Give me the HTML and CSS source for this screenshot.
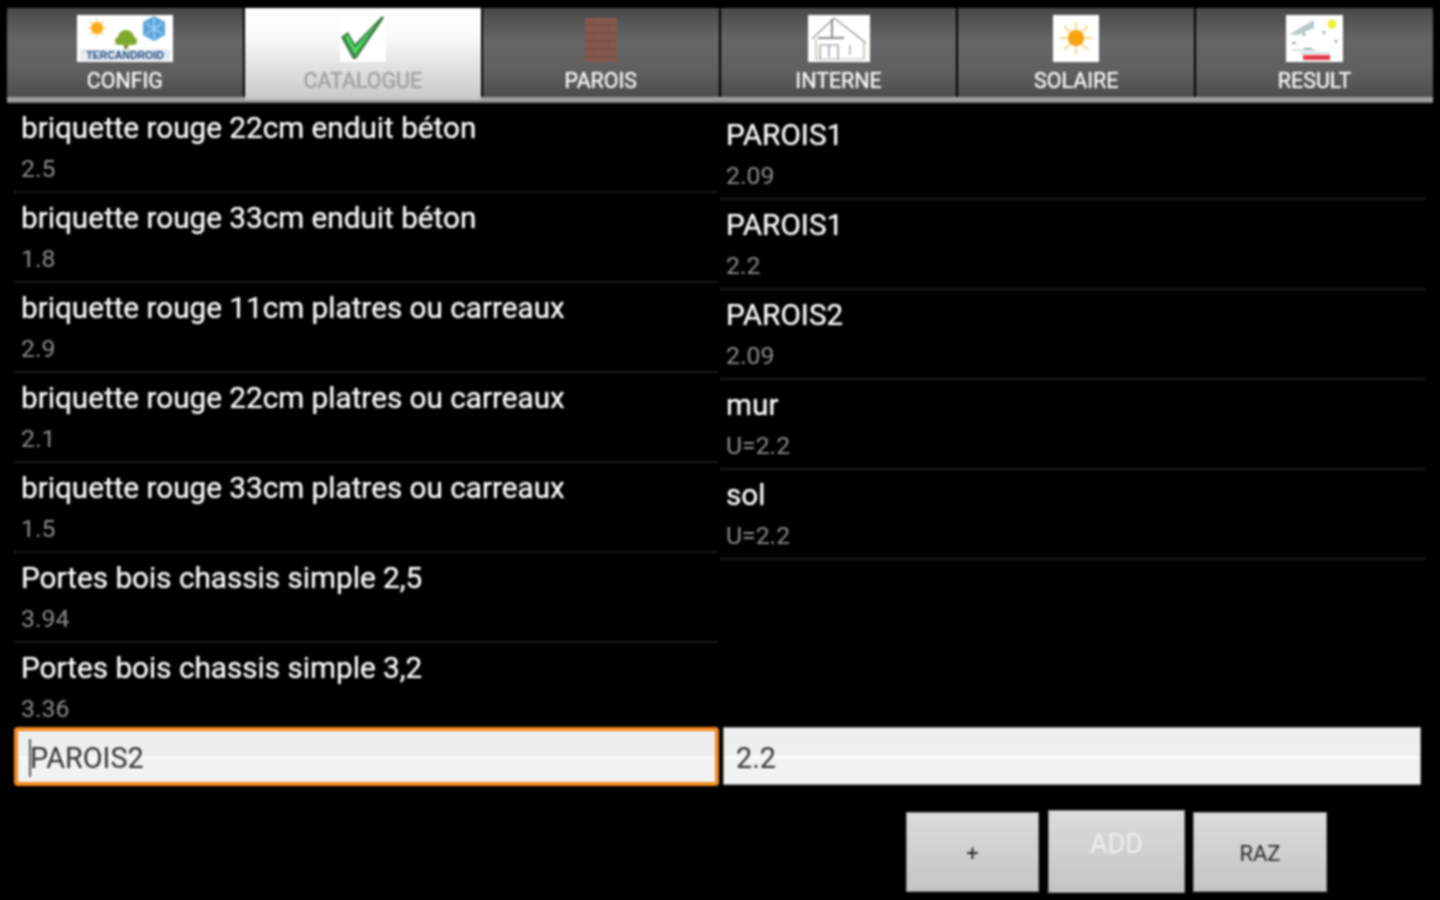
FILE: index.html
```html
<!DOCTYPE html>
<html>
<head>
    <meta charset="utf-8">
    <link rel="stylesheet" href="styles.css">
</head>
<body>
    <div class="app">
        <!-- Tabs -->
        <div class="tabs">
            <div class="tab">
                <svg class="icon" width="96" height="47" viewBox="0 0 96 47">
                    <rect width="96" height="47" fill="#fff"/>
                    <g stroke="#f7e2a8" stroke-width="2">
                        <path d="M20 3V23M10 13H30M13 6L27 20M27 6L13 20"/>
                    </g>
                    <circle cx="20" cy="13" r="6" fill="#f7a81b"/>
                    <path d="M77 1L88 7V20L77 26L66 20V7Z" fill="#5aa5dd"/>
                    <path d="M69 8L85 19M85 8L69 19M77 3V24" stroke="#a9d0ec" stroke-width="1.5"/>
                    <circle cx="49" cy="23" r="8" fill="#7ea92c"/>
                    <circle cx="42" cy="26" r="4" fill="#7ea92c"/>
                    <circle cx="56" cy="26" r="4" fill="#7ea92c"/>
                    <rect x="47" y="29" width="4" height="6" fill="#8a9a3a"/>
                    <rect x="3" y="34" width="90" height="12" fill="#e6ecf3"/>
                    <text class="logo-text" x="48" y="44" text-anchor="middle">TERCANDROID</text>
                </svg>
                <span class="tab-label">CONFIG</span>
            </div>
            <div class="tab active">
                <svg class="icon" width="46" height="47" viewBox="0 0 46 47">
                    <rect width="46" height="47" fill="#fff"/>
                    <path d="M1 22L8 17L15 29L42 1L44 3L16 44H13Z" fill="#3a8044"/>
                    <path d="M5 22L8 20L15 33L37 8L15 40Z" fill="#4fd860"/>
                </svg>
                <span class="tab-label">CATALOGUE</span>
            </div>
            <div class="tab">
                <svg class="icon" width="32" height="44" viewBox="0 0 32 44">
                    <rect width="32" height="44" fill="#85584e"/>
                    <path d="M0 7H32M0 15H32M0 23H32M0 31H32M0 39H32M9 0V7M24 7V15M9 15V23M24 23V31M9 31V39" stroke="#795047" stroke-width="2"/>
                </svg>
                <span class="tab-label">PAROIS</span>
            </div>
            <div class="tab">
                <svg class="icon" width="62" height="47" viewBox="0 0 62 47">
                    <rect width="62" height="47" fill="#fff"/>
                    <path d="M4 24L26 3L58 28" fill="none" stroke="#8d9580" stroke-width="1.2"/>
                    <path d="M8 24V44H56V26" fill="none" stroke="#a9b098" stroke-width="1.2"/>
                    <path d="M10 23H36M24 4V22" stroke="#666" stroke-width="1.5"/>
                    <path d="M12 30H30V44M12 30V44M21 30V42" fill="none" stroke="#888" stroke-width="1.2"/>
                    <path d="M42 30V40" stroke="#bbb" stroke-width="2"/>
                </svg>
                <span class="tab-label">INTERNE</span>
            </div>
            <div class="tab">
                <svg class="icon" width="46" height="47" viewBox="0 0 46 47">
                    <rect width="46" height="47" fill="#fff"/>
                    <path d="M23 7V40M6 23H40M11 11L35 35M35 11L11 35" stroke="#f3e3a0" stroke-width="2.5"/>
                    <circle cx="23" cy="23" r="8" fill="#f7a30f"/>
                </svg>
                <span class="tab-label">SOLAIRE</span>
            </div>
            <div class="tab">
                <svg class="icon" width="57" height="47" viewBox="0 0 57 47">
                    <rect width="57" height="47" fill="#fff"/>
                    <path d="M4 19L28 5V13L12 20Z" fill="#b5c9c6"/>
                    <circle cx="46" cy="9" r="4.5" fill="#eef03a"/>
                    <path d="M6 28H10M38 16V19M50 25V28M18 18V21M18 34H26" stroke="#8c9a9a" stroke-width="2"/>
                    <path d="M6 35H30M14 38H44" stroke="#c3d8dc" stroke-width="1.5"/>
                    <rect x="17" y="40" width="27" height="5" fill="#e23a4a"/>
                </svg>
                <span class="tab-label">RESULT</span>
            </div>
        </div>
        <div class="tabs-line"></div>

        <!-- Lists -->
        <div class="lists">
            <div class="list">
                <div class="row"><div class="row-title">briquette rouge 22cm enduit béton</div><div class="row-sub">2.5</div></div>
                <div class="row"><div class="row-title">briquette rouge 33cm enduit béton</div><div class="row-sub">1.8</div></div>
                <div class="row"><div class="row-title">briquette rouge 11cm platres ou carreaux</div><div class="row-sub">2.9</div></div>
                <div class="row"><div class="row-title">briquette rouge 22cm platres ou carreaux</div><div class="row-sub">2.1</div></div>
                <div class="row"><div class="row-title">briquette rouge 33cm platres ou carreaux</div><div class="row-sub">1.5</div></div>
                <div class="row"><div class="row-title">Portes bois chassis simple 2,5</div><div class="row-sub">3.94</div></div>
                <div class="row"><div class="row-title">Portes bois chassis simple 3,2</div><div class="row-sub">3.36</div></div>
            </div>
            <div class="list list-right">
                <div class="row"><div class="row-title">PAROIS1</div><div class="row-sub">2.09</div></div>
                <div class="row"><div class="row-title">PAROIS1</div><div class="row-sub">2.2</div></div>
                <div class="row"><div class="row-title">PAROIS2</div><div class="row-sub">2.09</div></div>
                <div class="row"><div class="row-title">mur</div><div class="row-sub">U=2.2</div></div>
                <div class="row"><div class="row-title">sol</div><div class="row-sub">U=2.2</div></div>
            </div>
        </div>

        <!-- Inputs -->
        <div class="fields">
            <div class="field focused"><span class="caret"></span>PAROIS2</div>
            <div class="field field-right">2.2</div>
        </div>

        <!-- Buttons -->
        <div class="buttons">
            <div class="btn btn-plus">+</div>
            <div class="btn btn-add">ADD</div>
            <div class="btn btn-raz">RAZ</div>
        </div>
    </div>
</body>
</html>
```

FILE: styles.css
```css
body {
    margin: 0;
    background: #000;
    font-family: Roboto, "Liberation Sans", sans-serif;
    overflow: hidden;
}
.app {
    display: flex;
    flex-direction: column;
    height: 900px;
    filter: blur(0.8px);
}

/* Tabs */
.tabs {
    display: flex;
    gap: 2px;
    height: 89px;
    margin: 8px 7px 0;
}
.tab {
    box-sizing: border-box;
    flex: 0 0 235.7px;
    display: flex;
    flex-direction: column;
    align-items: center;
    justify-content: flex-end;
    padding-bottom: 4px;
    background: linear-gradient(#484848, #666 35%, #606060 70%, #4c4c4c);
    color: #f8f8f8;
}
.tab:last-child {
    flex: 1;
}
.tab.active {
    flex-basis: 236.3px;
    height: 92px;
    padding-bottom: 7px;
    background: linear-gradient(#fff, #fafafa 30%, #c8c8c8);
    color: #a0a0a0;
    z-index: 1;
}
.icon {
    flex: none;
    margin-bottom: 7px;
}
.tab-label {
    font-size: 21.4px;
    line-height: 24px;
    text-shadow: 0 0 1px currentColor;
}
.logo-text {
    font-family: "Liberation Sans", sans-serif;
    font-size: 10.5px;
    font-weight: bold;
    fill: #24507f;
}
.tabs-line {
    height: 6px;
    margin: 0 7px;
    background: linear-gradient(#aaa, #888);
}

/* Lists */
.lists {
    display: flex;
    height: 624px;
    padding-left: 14px;
    padding-right: 15px;
    gap: 2px;
}
.list {
    width: 704px;
    overflow: hidden;
}
.list-right {
    width: 705px;
    padding-top: 7px;
}
.row {
    box-sizing: border-box;
    height: 90px;
    padding: 6px 0 0 7px;
    border-bottom: 2px solid #1c1c1c;
}
.list-right .row {
    padding-left: 6px;
}
.row-title {
    color: #fff;
    font-size: 29.7px;
    line-height: 38px;
    text-shadow: 0 0 1px rgba(255, 255, 255, 0.7);
}
.row-sub {
    margin-top: 3px;
    color: #8c8c8c;
    font-size: 24.8px;
    line-height: 38px;
}

/* Inputs */
.fields {
    display: flex;
    gap: 4px;
    padding-left: 14px;
}
.field {
    box-sizing: border-box;
    display: flex;
    align-items: center;
    width: 705px;
    height: 59px;
    padding-top: 3px;
    background: linear-gradient(#ededed, #f0f0f0 50%, #fff 52%, #f2f2f2 56%);
    color: #333;
    font-size: 28.8px;
}
.focused {
    border: 4px solid #f08a1f;
    border-radius: 4px;
    padding-left: 11px;
}
.caret {
    width: 2px;
    height: 38px;
    margin-right: -1px;
    background: #555;
}
.field-right {
    width: 698px;
    height: 58px;
    padding-left: 12px;
    border: 1px solid #999;
}

/* Buttons */
.buttons {
    display: flex;
    align-items: center;
    justify-content: flex-end;
    height: 83px;
    margin-top: 24px;
    padding-right: 113px;
    gap: 8px;
}
.btn {
    box-sizing: border-box;
    display: flex;
    align-items: center;
    justify-content: center;
    width: 133px;
    height: 80px;
    padding-top: 3px;
    background: linear-gradient(#dcdcdc, #c4c4c4);
    border: 1px solid #8f8f8f;
    color: #2a2a2a;
    font-size: 22px;
}
.btn-plus {
    margin-right: 1px;
}
.btn-add {
    width: 137px;
    height: 83px;
    padding-top: 0;
    padding-bottom: 16px;
    color: #efefef;
    font-size: 27px;
}
.btn-raz {
    width: 134px;
}
```
